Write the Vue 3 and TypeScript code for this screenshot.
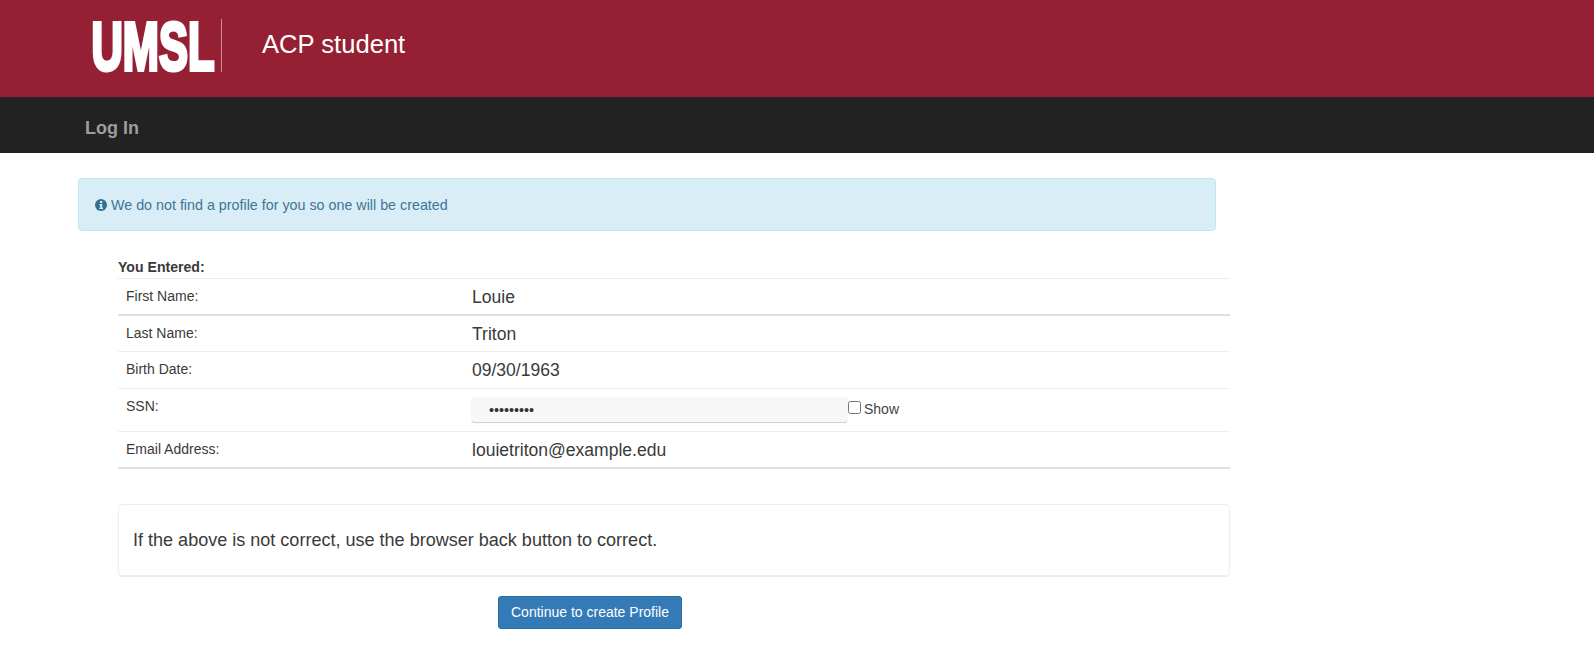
<script setup lang="ts">
interface Row { label: string; value: string; kind: string; strong?: boolean }
const rows: Row[] = [
  { label: 'First Name:', value: 'Louie', kind: 'tall', strong: true },
  { label: 'Last Name:', value: 'Triton', kind: 'plain' },
  { label: 'Birth Date:', value: '09/30/1963', kind: 'tall' },
  { label: 'SSN:', value: '', kind: 'ssn' },
  { label: 'Email Address:', value: 'louietriton@example.edu', kind: 'tall', strong: true },
]
</script>

<template>
  <div class="page">
    <header class="banner">
      <svg class="logo" width="127" height="82" viewBox="0 0 202 82" preserveAspectRatio="none" role="img" aria-label="UMSL">
        <text x="4" y="65.5" class="logo-text">UMSL</text>
      </svg>
      <span class="logo-rule"></span>
      <span class="title">ACP student</span>
    </header>
    <nav class="navbar"><a class="nav-link">Log In</a></nav>

    <main class="content">
      <div class="alert">
        <svg class="info" width="12" height="12" viewBox="0 0 12 12">
          <circle cx="6" cy="6" r="6" fill="#31708f" />
          <rect x="5" y="2" width="2.2" height="2" fill="#d9edf7" />
          <path d="M4.4 5h2.8v3.8h.8V10H4.4V8.8h.8V6.2h-.8z" fill="#d9edf7" />
        </svg>
        <span>We do not find a profile for you so one will be created</span>
      </div>

      <section class="details">
        <div class="entered">You Entered:</div>
        <div
          v-for="row in rows"
          :key="row.label"
          class="row"
          :class="['row-' + row.kind, { 'row-strong': row.strong }]"
        >
          <div class="label">{{ row.label }}</div>
          <div v-if="row.kind === 'ssn'" class="ssn-cell">
            <input class="ssn" type="password" value="123456789" readonly />
            <label class="show"><input type="checkbox" class="check" />Show</label>
          </div>
          <div v-else class="value">{{ row.value }}</div>
        </div>

        <div class="panel">If the above is not correct, use the browser back button to correct.</div>
        <div class="actions">
          <button class="btn" type="button">Continue to create Profile</button>
        </div>
      </section>
    </main>
  </div>
</template>

<style>
html, body { margin: 0; background: #fff; }
</style>

<style scoped>
.page {
  font-family: "Liberation Sans", Arial, sans-serif;
  color: #3a3a3a;
  min-height: 661px;
  background: #fff;
  overflow: hidden;
}
.banner {
  height: 97px;
  background: #962033;
  display: flex;
  align-items: flex-start;
  padding-left: 93px;
  box-sizing: border-box;
}
.logo { margin: 5px 0 0 -4px; display: block; flex: none; }
.logo-text {
  font-family: "Liberation Sans", Arial, sans-serif;
  font-weight: 700;
  font-size: 69px;
  fill: #fff;
  stroke: #fff;
  stroke-width: 4px;
}
.logo-rule {
  width: 1px;
  height: 53px;
  margin: 19px 0 0 5px;
  background: #c98f9a;
}
.title {
  margin-left: 40px;
  margin-top: 28px;
  font-size: 25.6px;
  line-height: 32px;
  color: #fff;
}
.navbar {
  height: 56px;
  box-sizing: border-box;
  background: #222;
  padding: 7px 0 0 85px;
  display: flex;
  align-items: center;
}
.nav-link { color: #9d9d9d; font-size: 18px; font-weight: 700; }
.content { padding: 25px 0 0 78px; width: 1138px; }
.alert {
  height: 53px;
  box-sizing: border-box;
  background: #d9edf7;
  border: 1px solid #bce8f1;
  border-radius: 4px;
  color: #3d7595;
  font-size: 14.3px;
  display: flex;
  align-items: center;
  gap: 4px;
  padding-left: 16px;
}
.details { margin: 26px -14px 0 40px; }
.entered {
  font-size: 14.1px;
  font-weight: 700;
  line-height: 20px;
  height: 21px;
  border-bottom: 1px solid #eee;
}
.row {
  display: grid;
  grid-template-columns: 346px 1fr;
  height: 36px;
  box-sizing: border-box;
  border-bottom: 1px solid #eee;
  padding-left: 8px;
  align-items: center;
}
.row-tall { height: 37px; }
.row-strong { border-bottom: 2px solid #e0e0e0; }
.row-ssn { height: 43px; align-items: start; }
.label { font-size: 14px; padding-bottom: 2px; }
.row-ssn .label { padding: 9px 0 0; }
.value { font-size: 17.55px; line-height: 24px; }
.ssn-cell { display: flex; align-items: flex-start; padding-top: 9px; }
.ssn {
  width: 375px;
  height: 24px;
  box-sizing: border-box;
  border: 0;
  border-radius: 2px;
  background: #f7f7f7;
  box-shadow: 0 1px 1px rgba(0,0,0,.18), 0 0 1px rgba(0,0,0,.25);
  padding: 0 17px;
  font-size: 14.3px;
  font-family: "Liberation Sans", Arial, sans-serif;
  color: #333;
  outline: none;
}
.show { display: flex; align-items: center; font-size: 14px; color: #444; margin-top: 3px; }
.check { width: 13px; height: 13px; margin: 0 3px 3px 1px; }
.panel {
  margin-top: 35px;
  height: 72px;
  box-sizing: border-box;
  border: 1px solid #eee;
  border-radius: 4px;
  box-shadow: 0 1px 1px rgba(0,0,0,.08);
  padding-left: 14px;
  display: flex;
  align-items: center;
  font-size: 18.05px;
}
.actions { margin-top: 20px; padding-left: 380px; }
.btn {
  width: 184px;
  height: 33px;
  background: #337ab7;
  color: #fff;
  border: 1px solid #2e6da4;
  border-radius: 3px;
  font-family: "Liberation Sans", Arial, sans-serif;
  font-size: 14px;
  padding: 0 0 2px;
}
</style>
